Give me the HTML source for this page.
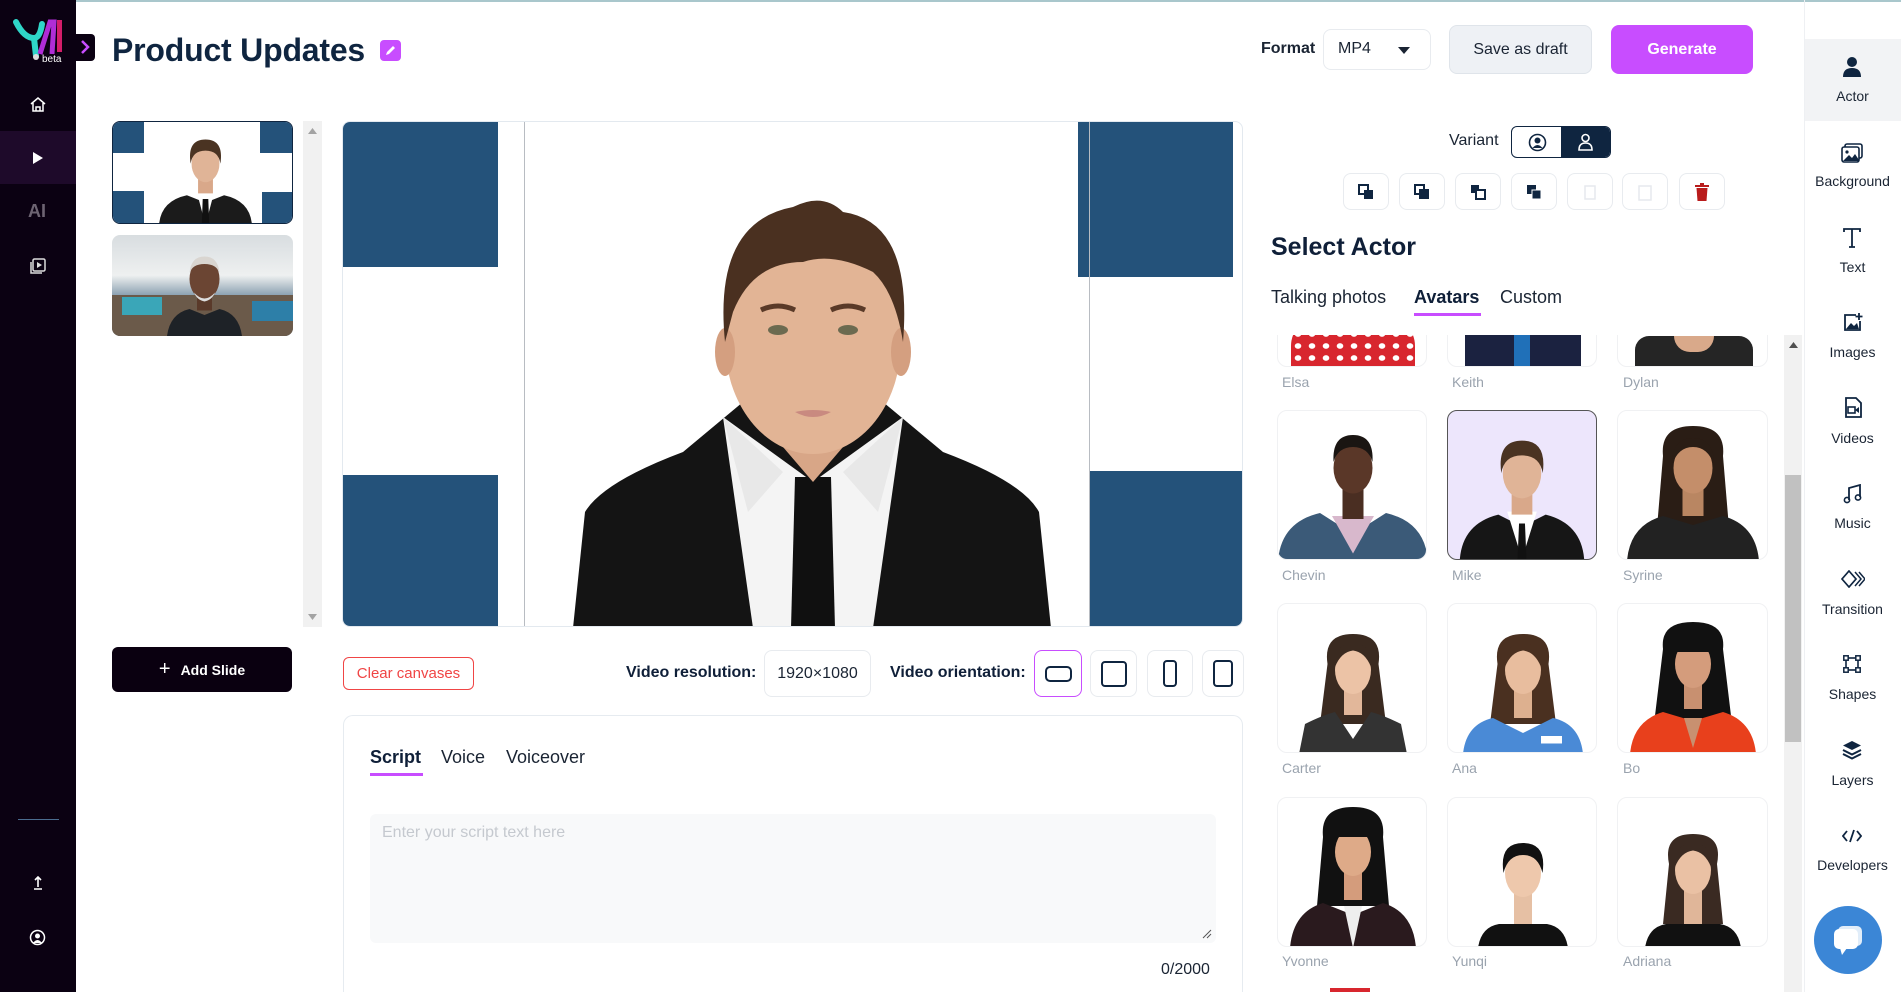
<!DOCTYPE html>
<html style="width:1901px;height:992px;overflow:hidden"><head><meta charset="utf-8"><style>
*{box-sizing:border-box;margin:0;padding:0}
body{width:1901px;height:992px;overflow:hidden;background:#fff;font-family:"Liberation Sans",sans-serif;color:#0f1f38;position:relative}
.a{position:absolute}
.side{left:0;top:0;width:76px;height:992px;background:#0b0112}
.btn{border:1px solid #e8ebef;border-radius:8px;background:#fff}
.tl{display:flex;align-items:center;justify-content:center}
.rp .it{position:absolute;left:1804px;width:97px;text-align:center;font-size:14px;color:#1a2433}
.card{border:1px solid #f0f1f3;border-radius:10px;overflow:hidden;background:#fff}
.nm{font-size:14px;color:#9aa3ae}
</style></head><body>
<div class="a" style="left:0;top:0;width:1901px;height:2px;background:#a9c7cc"></div>
<!-- left sidebar -->
<div class="a side"></div>
<svg class="a" style="left:12px;top:18px" width="56" height="46" viewBox="0 0 56 46">
<path d="M4 4 Q12 20 22 20 Q28 20 30 6" stroke="#2fd6c8" stroke-width="6" fill="none" stroke-linecap="round"/>
<path d="M22 20 L24 38" stroke="#2fd6c8" stroke-width="6" stroke-linecap="round"/>
<path d="M28 36 L38 4 L42 4 L40 36" stroke="#b02dd6" stroke-width="5" fill="none"/>
<rect x="45" y="2" width="5" height="32" fill="#d41d6a"/>
<circle cx="24" cy="39" r="3" fill="#ddd"/>
<text x="30" y="44" font-size="10" fill="#fff" font-family="Liberation Sans">beta</text></svg>
<div class="a" style="left:76px;top:34px;width:19px;height:27px;background:#0b0112;border-radius:0 4px 4px 0"></div>
<svg class="a" style="left:79px;top:39px" width="12" height="16"><path d="M3 2 L9 8 L3 14" stroke="#c84dff" stroke-width="2.5" fill="none"/></svg>
<svg class="a" style="left:29px;top:96px" width="18" height="16" viewBox="0 0 18 16"><path d="M2 8 L9 2 L16 8 M4 7 V15 H14 V7 M7 15 V11 H11 V15" stroke="#fff" stroke-width="1.5" fill="none"/></svg>
<div class="a" style="left:0;top:131px;width:76px;height:53px;background:#1e0a2a"></div>
<svg class="a" style="left:32px;top:152px" width="12" height="12"><path d="M1 0 L11 6 L1 12Z" fill="#fff"/></svg>
<div class="a" style="left:28px;top:201px;font-size:18px;font-weight:bold;color:#6d6472">AI</div>
<svg class="a" style="left:30px;top:258px" width="16" height="16" viewBox="0 0 16 16"><rect x="3" y="1" width="12" height="12" rx="1.5" stroke="#ddd" stroke-width="1.5" fill="none"/><path d="M1 4 V15 H12" stroke="#ddd" stroke-width="1.5" fill="none"/><path d="M7 4 L12 7 L7 10Z" fill="#ddd"/></svg>
<div class="a" style="left:18px;top:819px;width:41px;height:1px;background:#4b6c8f"></div>
<svg class="a" style="left:32px;top:876px" width="12" height="14"><path d="M6 1 V11 M3 4 L6 1 L9 4 M2 13 H10" stroke="#fff" stroke-width="1.6" fill="none"/></svg>
<svg class="a" style="left:29px;top:929px" width="17" height="17" viewBox="0 0 17 17"><circle cx="8.5" cy="8.5" r="7" stroke="#fff" stroke-width="1.5" fill="none"/><circle cx="8.5" cy="7" r="2.5" fill="#fff"/><path d="M4 14 Q8.5 8 13 14" fill="#fff"/></svg>

<!-- header -->
<div class="a" style="left:112px;top:32px;font-size:32px;font-weight:bold;color:#0f2540;letter-spacing:-0.2px">Product Updates</div>
<div class="a tl" style="left:380px;top:40px;width:21px;height:21px;background:#c84dff;border-radius:4px"><svg width="13" height="13"><path d="M2 11 L3 8 L9 2 L11 4 L5 10Z" fill="#fff"/></svg></div>
<div class="a" style="left:1261px;top:40px;font-size:16px;font-weight:bold;color:#1a2433">Format</div>
<div class="a btn" style="left:1323px;top:29px;width:108px;height:41px;font-size:16px;padding:10px 14px;color:#1a2433">MP4<svg style="position:absolute;right:20px;top:17px" width="12" height="7"><path d="M0 0 H12 L6 7Z" fill="#1a2433"/></svg></div>
<div class="a tl" style="left:1449px;top:25px;width:143px;height:49px;background:#eef1f5;border:1px solid #dfe4ea;border-radius:8px;font-size:16px;color:#1a2433">Save as draft</div>
<div class="a tl" style="left:1611px;top:25px;width:142px;height:49px;background:#c84dff;border-radius:8px;font-size:16px;font-weight:bold;color:#fff">Generate</div>

<!-- slides -->
<div class="a" style="left:112px;top:121px;width:181px;height:103px;border:1.5px solid #0f2540;border-radius:8px;overflow:hidden;background:#fff">
<div class="a" style="left:0;top:0;width:31px;height:31px;background:#24527a"></div><div class="a" style="left:0;top:69px;width:31px;height:34px;background:#24527a"></div>
<div class="a" style="left:147px;top:0;width:34px;height:31px;background:#24527a"></div><div class="a" style="left:149px;top:70px;width:32px;height:33px;background:#24527a"></div>
<svg class="a" style="left:45px;top:10px" width="95" height="93" viewBox="0 0 100 100"><path d="M0 100 Q2 74 30 68 L50 76 L70 68 Q98 74 100 100Z" fill="#1b1b1b"/><path d="M40 62 L50 100 L60 62Z" fill="#fff"/><path d="M47 72 L53 72 L54 100 L46 100Z" fill="#111"/><rect x="42" y="48" width="16" height="18" fill="#d9a88a"/><ellipse cx="50" cy="34" rx="15" ry="20" fill="#e0b497"/><path d="M34 34 Q30 8 50 8 Q70 8 66 34 Q64 20 50 20 Q36 20 34 34Z" fill="#4a3322"/></svg>
</div>
<div class="a" style="left:112px;top:235px;width:181px;height:101px;border-radius:8px;overflow:hidden;background:linear-gradient(#d8dde0 0,#eef0f0 40%,#8aa0b0 60%,#4d6b7e 100%)">
<div class="a" style="left:0;top:60px;width:181px;height:41px;background:#6b5a4a"></div>
<div class="a" style="left:10px;top:62px;width:40px;height:18px;background:#3aa6b8"></div>
<div class="a" style="left:140px;top:66px;width:41px;height:20px;background:#2d7fa8"></div>
<svg class="a" style="left:55px;top:8px" width="75" height="93" viewBox="0 0 100 124"><path d="M0 124 Q4 94 30 88 L50 96 L70 88 Q96 94 100 124Z" fill="#1e2227"/><rect x="40" y="66" width="20" height="24" fill="#5a3a2a"/><ellipse cx="50" cy="48" rx="20" ry="27" fill="#6b4533"/><path d="M30 40 Q32 18 50 18 Q68 18 70 40 Q66 28 50 28 Q34 28 30 40Z" fill="#d9d5d0"/><path d="M36 66 Q50 82 64 66 Q60 76 50 78 Q40 76 36 66Z" fill="#ddd"/></svg>
</div>
<div class="a" style="left:303px;top:121px;width:19px;height:506px;background:#f1f1f1"></div>
<svg class="a" style="left:308px;top:128px" width="9" height="6"><path d="M0 6 L4.5 0 L9 6Z" fill="#a3a3a3"/></svg>
<svg class="a" style="left:308px;top:614px" width="9" height="6"><path d="M0 0 L4.5 6 L9 0Z" fill="#a3a3a3"/></svg>
<div class="a tl" style="left:112px;top:647px;width:180px;height:45px;background:#0a0010;border-radius:6px;color:#fff;font-size:14px;font-weight:bold"><span style="font-size:20px;margin-right:10px;font-weight:normal">+</span>Add Slide</div>

<!-- canvas -->
<div class="a" style="left:342px;top:121px;width:901px;height:506px;border:1px solid #e3e9ef;border-radius:8px;overflow:hidden;background:#fff">
<div class="a" style="left:0;top:0;width:155px;height:145px;background:#24527a"></div>
<div class="a" style="left:0;top:353px;width:155px;height:153px;background:#24527a"></div>
<div class="a" style="left:735px;top:0;width:155px;height:155px;background:#24527a"></div>
<div class="a" style="left:746px;top:349px;width:155px;height:157px;background:#24527a"></div>
<div class="a" style="left:181px;top:0;width:1px;height:506px;background:#b8bcc2"></div>
<div class="a" style="left:746px;top:0;width:1px;height:506px;background:#b8bcc2"></div>
<div class="a" style="left:181px;top:504px;width:566px;height:1px;background:#b8bcc2"></div>
<svg class="a" style="left:230px;top:60px" width="480" height="446" viewBox="0 0 480 446">
<path d="M0 446 L12 330 Q30 300 110 270 L170 220 L310 220 L370 270 Q450 300 466 330 L478 446Z" fill="#141414"/>
<path d="M150 235 L180 446 L300 446 L330 235 L240 300Z" fill="#f4f4f4"/>
<path d="M150 235 L175 330 L210 290Z M330 235 L305 330 L270 290Z" fill="#e8e8e8"/>
<path d="M222 295 L258 295 L262 446 L218 446Z" fill="#101010"/>
<path d="M180 180 Q182 250 240 262 Q298 250 300 180 L300 230 L240 300 L180 230Z" fill="#d8a687"/>
<ellipse cx="240" cy="160" rx="88" ry="112" fill="#e2b495"/>
<ellipse cx="152" cy="170" rx="10" ry="24" fill="#d49f80"/><ellipse cx="328" cy="170" rx="10" ry="24" fill="#d49f80"/>
<path d="M152 160 Q140 40 220 25 Q250 10 270 30 Q340 40 330 160 Q322 110 300 90 Q260 70 230 80 Q180 80 160 130Z" fill="#4a3020"/>
<ellipse cx="205" cy="148" rx="10" ry="5" fill="#6b6a50"/><ellipse cx="275" cy="148" rx="10" ry="5" fill="#6b6a50"/>
<path d="M188 128 Q205 120 222 128 M258 128 Q275 120 292 128" stroke="#5a3a28" stroke-width="5" fill="none"/>
<path d="M222 230 Q240 226 258 230 Q240 240 222 230Z" fill="#c98a80"/>
</svg>
</div>

<!-- bottom controls -->
<div class="a tl" style="left:343px;top:657px;width:131px;height:33px;border:1px solid #f04545;border-radius:6px;color:#f04545;font-size:15px">Clear canvases</div>
<div class="a" style="left:626px;top:664px;font-size:16px;font-weight:bold;color:#0f1f38">Video resolution:</div>
<div class="a btn tl" style="left:764px;top:650px;width:107px;height:47px;font-size:16px;color:#1a2433">1920×1080</div>
<div class="a" style="left:890px;top:664px;font-size:16px;font-weight:bold;color:#0f1f38">Video orientation:</div>
<div class="a btn tl" style="left:1034px;top:650px;width:48px;height:47px;border-color:#c84dff"><div style="width:27px;height:16px;border:2.5px solid #0f2540;border-radius:5px"></div></div>
<div class="a btn tl" style="left:1090px;top:650px;width:47px;height:47px"><div style="width:26px;height:26px;border:2.5px solid #0f2540;border-radius:4px"></div></div>
<div class="a btn tl" style="left:1147px;top:650px;width:46px;height:47px"><div style="width:14px;height:27px;border:2.5px solid #0f2540;border-radius:4px"></div></div>
<div class="a btn tl" style="left:1202px;top:650px;width:42px;height:47px"><div style="width:20px;height:27px;border:2.5px solid #0f2540;border-radius:4px"></div></div>

<div class="a" style="left:343px;top:715px;width:900px;height:277px;border:1px solid #e6ebf0;border-bottom:none;border-radius:10px 10px 0 0"></div>
<div class="a" style="left:370px;top:747px;font-size:18px;font-weight:bold;color:#0f1f38">Script</div>
<div class="a" style="left:370px;top:773px;width:53px;height:3px;background:#c84dff"></div>
<div class="a" style="left:441px;top:747px;font-size:18px;color:#1a2433">Voice</div>
<div class="a" style="left:506px;top:747px;font-size:18px;color:#1a2433">Voiceover</div>
<div class="a" style="left:370px;top:814px;width:846px;height:129px;background:#f8f9fa;border-radius:6px;padding:10px 12px;font-size:16px;color:#c5c9cf">Enter your script text here</div>
<svg class="a" style="left:1202px;top:929px" width="10" height="10"><path d="M1 9 L9 1 M5 9 L9 5" stroke="#555" stroke-width="1"/></svg>
<div class="a" style="left:1161px;top:961px;font-size:16px;color:#1a2433">0/2000</div>

<!-- actor panel -->
<div class="a" style="left:1449px;top:132px;font-size:16px;color:#1a2433">Variant</div>
<div class="a" style="left:1511px;top:126px;width:100px;height:32px;border:1.5px solid #0f2540;border-radius:6px;overflow:hidden;background:#fff">
<div class="a" style="left:49px;top:0;width:51px;height:32px;background:#0f2540"></div>
<svg class="a" style="left:16px;top:6px" width="19" height="19" viewBox="0 0 19 19"><circle cx="9.5" cy="9.5" r="8" stroke="#0f2540" stroke-width="1.6" fill="none"/><circle cx="9.5" cy="7.5" r="3" fill="#0f2540"/><path d="M4.5 15 Q9.5 9 14.5 15" fill="#0f2540"/></svg>
<svg class="a" style="left:64px;top:5px" width="19" height="20" viewBox="0 0 19 20"><circle cx="9.5" cy="6" r="3.5" stroke="#fff" stroke-width="1.6" fill="none"/><path d="M3 18 Q3 11 9.5 11 Q16 11 16 18Z" stroke="#fff" stroke-width="1.6" fill="none"/></svg>
</div>
<div class="a btn tl" style="left:1343px;top:173px;width:46px;height:37px"><svg width="16" height="16"><rect x="1" y="1" width="9" height="9" stroke="#0f2540" stroke-width="2" fill="#fff"/><rect x="6" y="6" width="9" height="9" fill="#0f2540"/></svg></div>
<div class="a btn tl" style="left:1399px;top:173px;width:46px;height:37px"><svg width="16" height="16"><rect x="1" y="1" width="9" height="9" stroke="#0f2540" stroke-width="2" fill="#fff"/><rect x="5" y="5" width="10" height="10" fill="#0f2540"/></svg></div>
<div class="a btn tl" style="left:1455px;top:173px;width:46px;height:37px"><svg width="16" height="16"><rect x="1" y="1" width="8" height="8" fill="#0f2540"/><rect x="6" y="6" width="9" height="9" stroke="#0f2540" stroke-width="2" fill="#fff"/></svg></div>
<div class="a btn tl" style="left:1511px;top:173px;width:46px;height:37px"><svg width="16" height="16"><rect x="1" y="1" width="9" height="9" fill="#0f2540"/><rect x="6" y="6" width="9" height="9" fill="#0f2540" stroke="#fff" stroke-width="1"/></svg></div>
<div class="a btn tl" style="left:1567px;top:173px;width:46px;height:37px"><svg width="16" height="18"><rect x="3" y="3" width="10" height="13" stroke="#e6e9ed" stroke-width="1.5" fill="none"/></svg></div>
<div class="a btn tl" style="left:1622px;top:173px;width:46px;height:37px"><svg width="16" height="18"><rect x="2" y="3" width="12" height="14" stroke="#e6e9ed" stroke-width="1.5" fill="none"/></svg></div>
<div class="a btn tl" style="left:1679px;top:173px;width:46px;height:37px"><svg width="14" height="18"><rect x="0" y="2" width="14" height="2" fill="#b91c1c"/><rect x="5" y="0" width="4" height="2" fill="#b91c1c"/><path d="M1.5 5 H12.5 L11.5 18 H2.5Z" fill="#b91c1c"/></svg></div>
<div class="a" style="left:1271px;top:233px;font-size:25px;font-weight:bold;color:#0f1f38">Select Actor</div>
<div class="a" style="left:1271px;top:287px;font-size:18px;color:#1a2433">Talking photos</div>
<div class="a" style="left:1414px;top:287px;font-size:18px;font-weight:bold;color:#0f1f38">Avatars</div>
<div class="a" style="left:1414px;top:313px;width:67px;height:3px;background:#c84dff"></div>
<div class="a" style="left:1500px;top:287px;font-size:18px;color:#1a2433">Custom</div>

<!-- grid -->
<div class="a" style="left:1270px;top:335px;width:510px;height:657px;overflow:hidden">
<div class="a card" style="left:7px;top:-20px;width:150px;height:52px"><div class="a" style="left:13px;top:0;width:124px;height:52px;background:#d8262e;border-radius:30px 30px 0 0;background-image:radial-gradient(#fff 3px,transparent 3.5px);background-size:14px 12px"></div></div>
<div class="a card" style="left:177px;top:-20px;width:150px;height:52px"><div class="a" style="left:17px;top:0;width:116px;height:52px;background:#1b2240"></div><div class="a" style="left:66px;top:0;width:16px;height:52px;background:#2070b8"></div></div>
<div class="a card" style="left:347px;top:-20px;width:151px;height:52px"><div class="a" style="left:17px;top:20px;width:118px;height:32px;background:#252525;border-radius:14px 14px 0 0"></div><div class="a" style="left:56px;top:20px;width:40px;height:16px;background:#d9a98a;border-radius:0 0 20px 20px"></div></div>
<div class="a nm" style="left:12px;top:39px">Elsa</div><div class="a nm" style="left:182px;top:39px">Keith</div><div class="a nm" style="left:353px;top:39px">Dylan</div>
</div>

<svg width="0" height="0" style="position:absolute"><defs>
<g id="m"><path d="M8 100 Q10 76 34 70 L50 78 L66 70 Q90 76 92 100Z" fill="#161616"/><path d="M40 68 L50 100 L60 68Z" fill="#fff"/><path d="M48 76 L52 76 L53 100 L47 100Z" fill="#111"/><rect x="43" y="52" width="14" height="18" fill="#d9a88a"/><ellipse cx="50" cy="42" rx="13" ry="17" fill="#e0b497"/><path d="M36 42 Q33 20 50 20 Q67 20 64 42 Q62 30 50 30 Q38 30 36 42Z" fill="#4a3322"/></g>
</defs></svg>

<!-- row 2 -->
<div class="a card" style="left:1277px;top:410px;width:150px;height:150px"><svg width="150" height="150" viewBox="0 0 100 100"><path d="M0 100 Q2 74 28 68 L50 82 L72 68 Q98 74 100 100Z" fill="#3b5a78"/><path d="M36 70 L50 95 L64 70Z" fill="#d8b8cc"/><rect x="43" y="52" width="14" height="20" fill="#4a2e22"/><ellipse cx="50" cy="38" rx="13" ry="17" fill="#5a3728"/><path d="M37 34 Q36 16 50 16 Q64 16 63 34 Q60 24 50 24 Q40 24 37 34Z" fill="#1a1512"/></svg></div>
<div class="a card" style="left:1447px;top:410px;width:150px;height:150px;background:#ede6fc;border:1.5px solid #555"><svg width="148" height="148" viewBox="0 0 100 100"><use href="#m"/></svg></div>
<div class="a card" style="left:1617px;top:410px;width:151px;height:150px"><svg width="150" height="150" viewBox="0 0 100 100"><path d="M30 30 Q28 10 50 10 Q72 10 70 30 L74 78 L26 78Z" fill="#2a1d15"/><path d="M6 100 Q8 76 30 70 L50 76 L70 70 Q92 76 94 100Z" fill="#222"/><rect x="43" y="52" width="14" height="18" fill="#b98662"/><ellipse cx="50" cy="38" rx="13" ry="17" fill="#c48e6a"/><path d="M36 36 Q36 18 50 18 Q64 18 64 36 Q60 24 50 24 Q40 24 36 36Z" fill="#2a1d15"/></svg></div>
<div class="a nm" style="left:1282px;top:567px">Chevin</div><div class="a nm" style="left:1452px;top:567px">Mike</div><div class="a nm" style="left:1623px;top:567px">Syrine</div>
<!-- row 3 -->
<div class="a card" style="left:1277px;top:603px;width:150px;height:150px"><svg width="150" height="150" viewBox="0 0 100 100"><path d="M33 40 Q30 20 50 20 Q70 20 67 40 L72 80 L28 80Z" fill="#3a2a20"/><path d="M14 100 L18 80 Q30 74 38 72 L50 90 L62 72 Q70 74 82 80 L86 100Z" fill="#333"/><rect x="44" y="56" width="12" height="18" fill="#e2b79a"/><ellipse cx="50" cy="44" rx="12" ry="16" fill="#ecc3a6"/><path d="M38 42 Q38 26 50 26 Q62 26 62 42 Q58 32 50 31 Q42 32 38 42Z" fill="#3a2a20"/></svg></div>
<div class="a card" style="left:1447px;top:603px;width:150px;height:150px"><svg width="150" height="150" viewBox="0 0 100 100"><path d="M33 40 Q30 20 50 20 Q70 20 67 40 L72 80 L28 80Z" fill="#4a3020"/><path d="M10 100 Q12 80 30 76 L50 86 L70 76 Q88 80 90 100Z" fill="#4a8ad6"/><rect x="62" y="88" width="14" height="5" fill="#fff"/><rect x="44" y="56" width="12" height="20" fill="#ddb08f"/><ellipse cx="50" cy="44" rx="12" ry="16" fill="#e8bd9e"/><path d="M38 42 Q38 26 50 26 Q62 26 62 42 Q58 32 50 31 Q42 32 38 42Z" fill="#4a3020"/></svg></div>
<div class="a card" style="left:1617px;top:603px;width:151px;height:150px"><svg width="150" height="150" viewBox="0 0 100 100"><path d="M30 30 Q28 12 50 12 Q72 12 70 30 L76 80 L24 80Z" fill="#111"/><path d="M8 100 Q10 78 30 72 L50 78 L70 72 Q90 78 92 100Z" fill="#e8401c"/><path d="M44 76 L50 96 L56 76Z" fill="#c89070"/><rect x="44" y="52" width="12" height="18" fill="#c89070"/><ellipse cx="50" cy="40" rx="12" ry="16" fill="#d49c7c"/><rect x="37" y="22" width="26" height="10" fill="#111"/></svg></div>
<div class="a nm" style="left:1282px;top:760px">Carter</div><div class="a nm" style="left:1452px;top:760px">Ana</div><div class="a nm" style="left:1623px;top:760px">Bo</div>
<!-- row 4 -->
<div class="a card" style="left:1277px;top:797px;width:150px;height:150px"><svg width="150" height="150" viewBox="0 0 100 100"><path d="M30 26 Q28 6 50 6 Q72 6 70 26 L74 72 L26 72Z" fill="#111"/><path d="M8 100 Q10 76 30 70 L50 78 L70 70 Q90 76 92 100Z" fill="#2a1a1e"/><path d="M44 72 L50 100 L56 72Z" fill="#eee"/><rect x="44" y="48" width="12" height="20" fill="#d49c7c"/><ellipse cx="50" cy="36" rx="12" ry="16" fill="#deaa88"/><rect x="37" y="16" width="26" height="10" fill="#111"/></svg></div>
<div class="a card" style="left:1447px;top:797px;width:150px;height:150px"><svg width="150" height="150" viewBox="0 0 100 100"><path d="M20 100 Q22 86 34 84 L66 84 Q78 86 80 100Z" fill="#111"/><rect x="44" y="62" width="12" height="22" fill="#e6c0a4"/><ellipse cx="50" cy="50" rx="12" ry="16" fill="#eec8ac"/><path d="M37 50 Q34 30 50 30 Q66 30 63 50 Q60 38 50 38 Q40 38 37 50Z" fill="#111"/></svg></div>
<div class="a card" style="left:1617px;top:797px;width:151px;height:150px"><svg width="150" height="150" viewBox="0 0 100 100"><path d="M34 44 Q30 24 50 24 Q70 24 66 44 L70 84 L30 84Z" fill="#3a2a22"/><path d="M18 100 Q20 86 32 84 L68 84 Q80 86 82 100Z" fill="#111"/><rect x="44" y="62" width="12" height="22" fill="#e0b699"/><ellipse cx="50" cy="48" rx="12" ry="16" fill="#eac1a4"/><path d="M38 46 Q38 30 50 30 Q62 30 62 46 Q58 36 50 35 Q42 36 38 46Z" fill="#3a2a22"/></svg></div>
<div class="a nm" style="left:1282px;top:953px">Yvonne</div><div class="a nm" style="left:1452px;top:953px">Yunqi</div><div class="a nm" style="left:1623px;top:953px">Adriana</div>
<div class="a" style="left:1330px;top:988px;width:40px;height:4px;background:#d8262e"></div>

<div class="a" style="left:1784px;top:335px;width:18px;height:657px;background:#f1f1f1"></div>
<div class="a" style="left:1785px;top:475px;width:16px;height:267px;background:#c1c1c1"></div>
<svg class="a" style="left:1789px;top:342px" width="9" height="6"><path d="M0 6 L4.5 0 L9 6Z" fill="#505050"/></svg>

<!-- right rail -->
<div class="a" style="left:1804px;top:0;width:1px;height:992px;background:#eef0f3"></div>
<div class="a" style="left:1805px;top:39px;width:96px;height:82px;background:#f2f3f5"></div>
<div class="rp">
<svg class="a" style="left:1842px;top:56px" width="20" height="22" viewBox="0 0 20 22"><circle cx="10" cy="6" r="5" fill="#0f2540"/><path d="M1 21 Q1 12 10 12 Q19 12 19 21Z" fill="#0f2540"/></svg>
<div class="it" style="top:88px">Actor</div>
<svg class="a" style="left:1841px;top:143px" width="22" height="20" viewBox="0 0 22 20"><rect x="4" y="1" width="17" height="14" rx="2" stroke="#0f2540" stroke-width="1.6" fill="none"/><rect x="1" y="4" width="17" height="15" rx="2" stroke="#0f2540" stroke-width="1.6" fill="#fff"/><circle cx="6" cy="9" r="1.6" fill="#0f2540"/><path d="M2 18 L8 12 L11 15 L14 11 L18 17 V18Z" fill="#0f2540"/></svg>
<div class="it" style="top:173px">Background</div>
<svg class="a" style="left:1843px;top:228px" width="18" height="20"><path d="M1 4 V1 H17 V4 M9 1 V19 M6 19 H12" stroke="#0f2540" stroke-width="1.8" fill="none"/></svg>
<div class="it" style="top:259px">Text</div>
<svg class="a" style="left:1843px;top:313px" width="20" height="20"><path d="M13 2 H2 V17 H17 V8" stroke="#0f2540" stroke-width="1.8" fill="none"/><path d="M3 16 L8 10 L11 13 L14 10 L16 16Z" fill="#0f2540"/><path d="M16 0 V7 M12.5 3.5 H19.5" stroke="#0f2540" stroke-width="1.8"/></svg>
<div class="it" style="top:344px">Images</div>
<svg class="a" style="left:1843px;top:397px" width="20" height="22"><path d="M3 1 H13 L18 6 V20 H3Z" stroke="#0f2540" stroke-width="1.8" fill="none"/><rect x="5" y="10" width="7" height="6" stroke="#0f2540" stroke-width="1.6" fill="none"/><path d="M12 13 L16 10 V16Z" fill="#0f2540"/></svg>
<div class="it" style="top:430px">Videos</div>
<svg class="a" style="left:1843px;top:484px" width="20" height="20"><path d="M6 16 V4 L17 1 V13" stroke="#0f2540" stroke-width="1.8" fill="none"/><circle cx="4" cy="16" r="2.6" stroke="#0f2540" stroke-width="1.6" fill="none"/><circle cx="15" cy="13.5" r="2.6" stroke="#0f2540" stroke-width="1.6" fill="none"/></svg>
<div class="it" style="top:515px">Music</div>
<svg class="a" style="left:1841px;top:570px" width="24" height="18"><path d="M8 1 L15 9 L8 17 L1 9Z" stroke="#0f2540" stroke-width="1.7" fill="none"/><path d="M14 2 L20 9 L14 16 M18 2 L24 9 L18 16" stroke="#0f2540" stroke-width="1.5" fill="none"/></svg>
<div class="it" style="top:601px">Transition</div>
<svg class="a" style="left:1843px;top:655px" width="18" height="18"><rect x="3" y="3" width="12" height="12" stroke="#0f2540" stroke-width="1.6" fill="none"/><rect x="0.8" y="0.8" width="4.4" height="4.4" fill="#fff" stroke="#0f2540" stroke-width="1.5"/><rect x="12.8" y="0.8" width="4.4" height="4.4" fill="#fff" stroke="#0f2540" stroke-width="1.5"/><rect x="0.8" y="12.8" width="4.4" height="4.4" fill="#fff" stroke="#0f2540" stroke-width="1.5"/><rect x="12.8" y="12.8" width="4.4" height="4.4" fill="#fff" stroke="#0f2540" stroke-width="1.5"/></svg>
<div class="it" style="top:686px">Shapes</div>
<svg class="a" style="left:1842px;top:740px" width="20" height="20"><path d="M10 1 L19 5.5 L10 10 L1 5.5Z" fill="#0f2540"/><path d="M1 10 L10 14.5 L19 10 M1 14 L10 18.5 L19 14" stroke="#0f2540" stroke-width="2" fill="none"/></svg>
<div class="it" style="top:772px">Layers</div>
<svg class="a" style="left:1842px;top:829px" width="20" height="14"><path d="M5 2 L1 7 L5 12 M15 2 L19 7 L15 12 M12 1 L8 13" stroke="#0f2540" stroke-width="1.8" fill="none"/></svg>
<div class="it" style="top:857px">Developers</div>
</div>
<div class="a tl" style="left:1814px;top:906px;width:68px;height:68px;border-radius:50%;background:#3b86d6"><svg width="36" height="34" viewBox="0 0 36 34"><rect x="8" y="3" width="24" height="20" rx="5" fill="#fff" opacity="0.85"/><rect x="4" y="6" width="24" height="20" rx="5" fill="#fff"/><path d="M10 25 L12 32 L17 25Z" fill="#fff"/></svg></div>
</body></html>
